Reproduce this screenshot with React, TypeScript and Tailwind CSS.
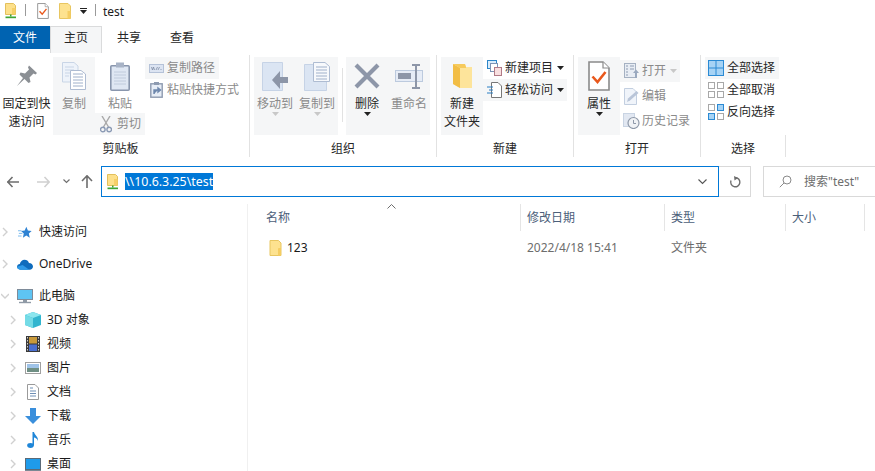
import { ReactNode } from "react";

const GREY = "#8d96a8";

function NetFolder() {
  return (
    <svg width="12" height="16" viewBox="0 0 12 16">
      <path d="M0.5 0.5H8.5L10.5 2.5V11.5H0.5Z" fill="#fde08a" stroke="#e3c05c" />
      <path d="M7 5H10.5V11.5H7Z" fill="#f6cf67" />
      <path d="M5 11.5H6.5V13.5H5Z" fill="#3fa535" />
      <path d="M0.5 13.5H11V15.2H0.5Z" fill="#3fa535" />
    </svg>
  );
}

function CheckDoc({ big }: { big?: boolean }) {
  return (
    <svg width={big ? 22 : 12} height={big ? 30 : 16} viewBox="0 0 22 30">
      <path d="M1 1H15L21 7V29H1Z" fill="#fff" stroke="#8a8a8a" strokeWidth="1.6" />
      <path d="M15 1V7H21" fill="#fff" stroke="#8a8a8a" strokeWidth="1.2" />
      <path d="M4.5 15.5L9.5 21L17.5 11" fill="none" stroke="#e9581c" strokeWidth="2.6" />
    </svg>
  );
}

function Folder({ w = 12, h = 16 }: { w?: number; h?: number }) {
  return (
    <svg width={w} height={h} viewBox="0 0 12 16">
      <path d="M0.5 0.5H9L11.5 3V15.5H0.5Z" fill="#fde28f" stroke="#e8c661" />
      <path d="M9 8H11.5V15.5H8.5V8.5Z" fill="#f5cd62" />
    </svg>
  );
}

function BigFolder() {
  return (
    <svg width="19" height="24" viewBox="0 0 19 24">
      <path d="M0 0H12L13 3H19V24H7L0 20Z" fill="#fde49b" />
      <path d="M0 0L7 4V24L0 20Z" fill="#f2bd45" />
      <path d="M7 4H13V3L12 0H0Z" fill="#f6ca5c" />
    </svg>
  );
}

function Pin() {
  return (
    <svg width="22" height="22" viewBox="0 0 22 22">
      <path
        d="M13 0.5L21 8L19.5 9.5L17.5 8.5L13.5 12.5L14.5 17L12.5 18L8.5 14L1 21L7 13L3.5 9.5L4.5 7.5L9 8.5L13 4.5L12 2.5Z"
        fill="#8b8f94"
      />
    </svg>
  );
}

function Pages({ w = 24, h = 28 }: { w?: number; h?: number }) {
  const lines = [12, 15, 18, 21, 24];
  return (
    <svg width={w} height={h} viewBox="0 0 24 28">
      <path d="M0.5 0.5H12L16 4V20H0.5Z" fill="#eef3fa" stroke="#c9d5e6" />
      <path d="M3 5H12M3 8H12M3 11H12M3 14H7" stroke="#c9d5e6" />
      <path d="M8.5 8.5H19L23.5 12V27.5H8.5Z" fill="#fff" stroke="#aebcd2" />
      {lines.map((y) => (
        <path key={y} d={`M11 ${y}H21`} stroke="#9fb0ca" />
      ))}
    </svg>
  );
}

function Clipboard() {
  return (
    <svg width="20" height="29" viewBox="0 0 20 29">
      <rect x="0.8" y="3.8" width="18.4" height="24.4" rx="1" fill="#dfe7f3" stroke="#8996ad" strokeWidth="1.6" />
      <rect x="6" y="0.5" width="8" height="5" fill="#a8b3c6" />
      <path d="M4 10H16M4 13H16M4 16H16M4 19H16M4 22H16" stroke="#c0cbdc" />
    </svg>
  );
}

function Scissors() {
  return (
    <svg width="12" height="17" viewBox="0 0 12 17">
      <path d="M2 0L8.5 11M10 0L3.5 11" stroke="#a9a9a9" strokeWidth="1.4" />
      <circle cx="2.8" cy="13.5" r="2.3" fill="none" stroke="#8c9bb5" strokeWidth="1.4" />
      <circle cx="9.2" cy="13.5" r="2.3" fill="none" stroke="#8c9bb5" strokeWidth="1.4" />
    </svg>
  );
}

function PathIcon() {
  return (
    <svg width="15" height="9" viewBox="0 0 15 9">
      <rect x="0.5" y="0.5" width="14" height="8" fill="#dce4f2" stroke="#b5c2d8" />
      <path d="M2.5 3L3.5 6L4.5 3L5.5 6M7 6L8.5 3M9 6L10.5 3M11.5 5.5H12.5" stroke="#7d8ba3" strokeWidth="0.8" fill="none" />
    </svg>
  );
}

function ShortcutIcon() {
  return (
    <svg width="13" height="16" viewBox="0 0 13 16">
      <rect x="0.8" y="1.8" width="11.4" height="13.4" fill="#e7edf6" stroke="#8d9ab0" strokeWidth="1.4" />
      <rect x="4" y="0" width="5" height="3" fill="#8d9ab0" />
      <path d="M4 12V8H8M8 6V10L10.5 8Z" stroke="#6f88ad" strokeWidth="1.4" fill="#6f88ad" />
    </svg>
  );
}

function MoveIcon() {
  return (
    <svg width="26" height="29" viewBox="0 0 26 29">
      <path d="M0.5 0.5H20.5V28.5H0.5Z" fill="#dbe5f3" stroke="#c6d3e6" />
      <path d="M26 15H18V9L10 18L18 27V21H26Z" fill={GREY} />
    </svg>
  );
}

function CopyToIcon() {
  return (
    <svg width="26" height="29" viewBox="0 0 26 29">
      <path d="M0.5 2.5H22.5V28.5H0.5Z" fill="#dbe5f3" stroke="#c6d3e6" />
      <path d="M9.5 0.5H21L25.5 4.5V19.5H9.5Z" fill="#f7f9fc" stroke="#aebcd2" />
      <path d="M12 5H23M12 8H23M12 11H23M12 14H23M12 17H23" stroke="#9fb0ca" />
    </svg>
  );
}

function DeleteIcon() {
  return (
    <svg width="26" height="26" viewBox="0 0 26 26">
      <path d="M2 2L24 24M24 2L2 24" stroke={GREY} strokeWidth="4.2" />
    </svg>
  );
}

function RenameIcon() {
  return (
    <svg width="29" height="25" viewBox="0 0 29 25">
      <rect x="0.5" y="6.5" width="27" height="11" fill="#e6ecf6" stroke="#bccade" />
      <rect x="3" y="9" width="13" height="6" fill={GREY} />
      <path d="M17 1H25M17 24H25M21 1V24" stroke={GREY} strokeWidth="2" />
    </svg>
  );
}

function NewItemIcon() {
  return (
    <svg width="15" height="16" viewBox="0 0 15 16">
      <rect x="0.5" y="0.5" width="9" height="8" fill="#d9ecfb" stroke="#2c86c9" />
      <rect x="3.5" y="3.5" width="7" height="8" fill="#fff" stroke="#7c94b5" />
      <rect x="7.5" y="7.5" width="7" height="8" fill="#f8dfe0" stroke="#b07a86" />
    </svg>
  );
}

function EasyIcon() {
  return (
    <svg width="15" height="16" viewBox="0 0 15 16">
      <path d="M4.5 0.5H11L14.5 4V15.5H4.5Z" fill="#fff" stroke="#777" />
      <path d="M0 5H6M2 8H6M0 11H6" stroke="#2b7fc4" />
    </svg>
  );
}

function OpenIcon() {
  return (
    <svg width="15" height="16" viewBox="0 0 15 16">
      <rect x="0.5" y="0.5" width="11" height="14" fill="#e8edf4" stroke="#a5b1c2" />
      <path d="M2 3H4M6 3H10M2 6H4M6 6H10M2 9H4M2 12H4" stroke="#8e9cb2" />
      <path d="M11 15V10H9L12 6.5L15 10H13V15Z" fill="#9aa9bf" />
    </svg>
  );
}

function EditIcon() {
  return (
    <svg width="15" height="17" viewBox="0 0 15 17">
      <path d="M0.5 0.5H9L12.5 4V16.5H0.5Z" fill="#f0f4fa" stroke="#c3cfe0" />
      <path d="M3 14L4 10.5L12.5 3L14.5 5L6 12.5Z" fill="#b9c5d8" />
    </svg>
  );
}

function HistoryIcon() {
  return (
    <svg width="17" height="16" viewBox="0 0 17 16">
      <rect x="0.5" y="0.5" width="11" height="13" fill="#e2e8f2" stroke="#c9d4e3" />
      <circle cx="10.5" cy="10" r="5.5" fill="#f0f2f5" stroke="#8e98a8" strokeWidth="1.2" />
      <path d="M10.5 7V10.5H13" stroke="#8e98a8" fill="none" />
    </svg>
  );
}

function SelectIcon({ fill }: { fill: "all" | "none" | "invert" }) {
  const cell = (x: number, y: number, on: boolean) =>
    on ? (
      <rect key={`${x}${y}`} x={x + 0.5} y={y + 0.5} width="6" height="6" fill="#a6d3f5" stroke="#2a8ad4" />
    ) : (
      <rect key={`${x}${y}`} x={x + 0.5} y={y + 0.5} width="6" height="6" fill="#fff" stroke="#a8a8a8" />
    );
  if (fill === "all") {
    return (
      <svg width="16" height="16" viewBox="0 0 16 16">
        <rect x="0.5" y="0.5" width="15" height="15" fill="#a6d3f5" stroke="#2a8ad4" />
        <path d="M8 0V16M0 8H16" stroke="#2a8ad4" />
      </svg>
    );
  }
  const on = fill === "invert";
  return (
    <svg width="16" height="16" viewBox="0 0 16 16">
      {cell(0, 0, false)}
      {cell(9, 0, on)}
      {cell(0, 9, on)}
      {cell(9, 9, false)}
    </svg>
  );
}

function Caret({ color = "#222" }: { color?: string }) {
  return (
    <svg width="7" height="4" viewBox="0 0 7 4">
      <path d="M0 0H7L3.5 4Z" fill={color} />
    </svg>
  );
}

function Chevron({ open }: { open?: boolean }) {
  return (
    <svg width="8" height="10" viewBox="0 0 8 10">
      <path d={open ? "M0 3L4 7L8 3" : "M2 1L6 5L2 9"} fill="none" stroke="#d0d0d0" strokeWidth="1.4" />
    </svg>
  );
}

function QuickStar() {
  return (
    <svg width="14" height="13" viewBox="0 0 16 14">
      <path d="M9.5 0.5L11.3 4.8L15.6 5.2L12.4 8.2L13.4 13L9.5 10.4L5.6 13L6.6 8.2L3.5 5.2L7.7 4.8Z" fill="#2e82d3" />
      <path d="M0 5H4M1 8H5M0 11H4" stroke="#6cb2ea" />
    </svg>
  );
}

function Cloud() {
  return (
    <svg width="16" height="11" viewBox="0 0 17 11">
      <path d="M3.5 11C1.5 11 0 9.7 0 8C0 6.2 1.4 5 3 5C3.6 2.2 5.6 0.5 8 0.5C10.3 0.5 12 1.8 12.7 3.8C15.2 3.8 17 5.4 17 7.6C17 9.6 15.5 11 13.5 11Z" fill="#0f6cbd" />
      <path d="M3.5 11C1.5 11 0 9.7 0 8L6 6L13 11Z" fill="#2f9ae8" />
    </svg>
  );
}

function Monitor() {
  return (
    <svg width="16" height="15" viewBox="0 0 16 15">
      <rect x="0.5" y="0.5" width="15" height="10" fill="#5ec4f3" stroke="#7e8b99" />
      <path d="M6 11H10V13H6Z" fill="#8f9aa6" />
      <path d="M2 13.5H14" stroke="#8f9aa6" strokeWidth="1.4" />
    </svg>
  );
}

function Cube() {
  return (
    <svg width="16" height="16" viewBox="0 0 16 16">
      <path d="M8 0L16 3V13L8 16L0 13V3Z" fill="#32b5cf" />
      <path d="M0 3L8 6L16 3L8 0Z" fill="#8ce6ee" />
      <path d="M0 3L8 6V16L0 13Z" fill="#74dbe6" />
    </svg>
  );
}

function Film() {
  return (
    <svg width="14" height="16" viewBox="0 0 14 16">
      <rect width="14" height="16" fill="#3a3a3a" />
      <rect x="3" y="1" width="8" height="6.5" fill="#c99a3a" />
      <rect x="3" y="8.5" width="8" height="6.5" fill="#4a6fd0" />
      <path d="M1.5 1V15M12.5 1V15" stroke="#ccc" strokeDasharray="1.5 1.5" />
    </svg>
  );
}

function Picture() {
  return (
    <svg width="16" height="12" viewBox="0 0 16 12">
      <rect x="0.5" y="0.5" width="15" height="11" fill="#fff" stroke="#a0a0a0" />
      <rect x="2" y="2" width="12" height="4" fill="#9fc3e8" />
      <rect x="2" y="6" width="12" height="4" fill="#6f8f84" />
    </svg>
  );
}

function DocIcon() {
  return (
    <svg width="12" height="16" viewBox="0 0 12 16">
      <path d="M0.5 0.5H8L11.5 4V15.5H0.5Z" fill="#fff" stroke="#9a9a9a" />
      <path d="M3 4H6M3 7H9M3 9.5H9M3 12H9" stroke="#6f8fb5" />
    </svg>
  );
}

function Download() {
  return (
    <svg width="16" height="16" viewBox="0 0 16 16">
      <path d="M5 0H11V8H16L8 16L0 8H5Z" fill="#3a8fdc" />
    </svg>
  );
}

function Music() {
  return (
    <svg width="12" height="16" viewBox="0 0 12 16">
      <ellipse cx="3.5" cy="13.5" rx="3.3" ry="2.4" fill="#1f86d8" />
      <path d="M5.5 13.5V0H7C7.4 3 11.5 4.5 11 9C10 6.5 8.5 6 7 5.6V13.5Z" fill="#1f86d8" />
    </svg>
  );
}

function Desktop() {
  return (
    <svg width="16" height="13" viewBox="0 0 16 13">
      <rect x="0.5" y="0.5" width="15" height="11" fill="#1f9bea" stroke="#5a6a78" />
      <path d="M0 12.5H16" stroke="#7a8894" />
    </svg>
  );
}

function BigBtn({
  icon,
  lines,
  w,
  hover,
  dim,
  caret,
}: {
  icon: ReactNode;
  lines: string[];
  w: string;
  hover?: boolean;
  dim?: boolean;
  caret?: string;
}) {
  return (
    <div className={`${w} h-[78px] flex flex-col items-center ${hover ? "bg-[#f5f6f7]" : ""}`}>
      <div className="h-[38px] w-full flex items-center justify-center shrink-0">{icon}</div>
      {lines.map((l) => (
        <span key={l} className={`leading-[18px] whitespace-nowrap ${dim ? "text-[#8a8a8a]" : "text-[#262626]"}`}>
          {l}
        </span>
      ))}
      {caret && (
        <span className="-mt-px flex">
          <Caret color={caret} />
        </span>
      )}
    </div>
  );
}

function SmallBtn({
  icon,
  label,
  w,
  hover,
  dim,
  caret,
  iconW = "w-[22px]",
}: {
  icon: ReactNode;
  label: string;
  w: string;
  hover?: boolean;
  dim?: boolean;
  caret?: string;
  iconW?: string;
}) {
  return (
    <div className={`${w} h-[22px] flex items-center ${hover ? "bg-[#f5f6f7]" : ""}`}>
      <span className={`${iconW} flex justify-center shrink-0`}>{icon}</span>
      <span className={`whitespace-nowrap ${dim ? "text-[#8a8a8a]" : "text-[#262626]"}`}>{label}</span>
      {caret && (
        <span className="ml-auto mr-[3px] flex">
          <Caret color={caret} />
        </span>
      )}
    </div>
  );
}

function Group({
  w,
  label,
  children,
  last,
  labelClass = "",
}: {
  w: string;
  label: string;
  children: ReactNode;
  last?: boolean;
  labelClass?: string;
}) {
  return (
    <div className={`${w} mt-[6px] h-[102px] flex flex-col shrink-0 ${last ? "" : "border-r border-[#e2e2e2]"}`}>
      <div className="h-[78px] mt-[2px] flex shrink-0">{children}</div>
      <div className={`h-[22px] pt-[5px] text-center text-[#262626] leading-[18px] ${labelClass}`}>{label}</div>
    </div>
  );
}

function TreeRow({
  icon,
  label,
  child,
  open,
}: {
  icon: ReactNode;
  label: string;
  child?: boolean;
  open?: boolean;
}) {
  return (
    <div className={`h-6 flex items-center shrink-0 ${child ? "pl-[9px]" : "pl-[1px]"}`}>
      <span className="w-[8px] flex justify-center">
        <Chevron open={open} />
      </span>
      <span className="w-[16px] ml-[8px] flex justify-center">{icon}</span>
      <span className="ml-[6px] text-[#1a1a1a] whitespace-nowrap">{label}</span>
    </div>
  );
}

function HeaderCell({ w, label }: { w: string; label: string }) {
  return (
    <div className={`${w} h-[27px] flex items-center pl-[6px] border-r border-[#e5e5e5] shrink-0 text-[#4c607a]`}>
      {label}
    </div>
  );
}

export default function App() {
  return (
    <div className="w-[875px] h-[471px] overflow-hidden bg-white text-[12px] font-['Noto_Sans','Noto_Sans_CJK_SC',sans-serif]">
      {/* title bar */}
      <div className="h-[26px] flex items-start pt-[3px] pl-[5px]">
        <NetFolder />
        <div className="w-px h-[12px] bg-[#9a9a9a] mt-[1px] ml-[8px]" />
        <div className="ml-[11px]">
          <CheckDoc />
        </div>
        <div className="ml-[10px]">
          <Folder />
        </div>
        <div className="ml-[9px] mt-[5px] flex flex-col items-center gap-[1px]">
          <div className="w-[7px] h-px bg-[#222]" />
          <Caret />
        </div>
        <div className="w-px h-[12px] bg-[#9a9a9a] mt-[1px] ml-[8px]" />
        <span className="ml-[7px] mt-px text-[12px] leading-[16px] text-[#1a1a1a]">test</span>
      </div>

      {/* tabs */}
      <div className="h-[23px] flex items-start">
        <div className="w-[50px] h-[23px] bg-[#0063b1] text-white flex items-center justify-center">文件</div>
        <div className="w-[52px] h-[27px] pb-[4px] bg-[#f5f6f7] border border-b-0 border-[#dadbdc] flex items-center justify-center text-[#262626]">
          主页
        </div>
        <div className="w-[54px] h-[23px] flex items-center justify-center text-[#262626]">共享</div>
        <div className="w-[52px] h-[23px] flex items-center justify-center text-[#262626]">查看</div>
      </div>

      {/* ribbon */}
      <div className="h-[109px] flex items-start">
        <Group w="w-[250px]" label="剪贴板" labelClass="pr-[8px]">
          <BigBtn w="w-[53px]" icon={<Pin />} lines={["固定到快", "速访问"]} />
          <BigBtn w="w-[42px]" hover dim icon={<Pages />} lines={["复制"]} />
          <div className="w-[50px] flex flex-col">
            <div className="h-[56px] flex flex-col items-center">
              <div className="h-[38px] flex items-center shrink-0">
                <Clipboard />
              </div>
              <span className="leading-[18px] text-[#8a8a8a]">粘贴</span>
            </div>
            <SmallBtn w="w-full" hover dim iconW="w-[22px]" icon={<Scissors />} label="剪切" />
          </div>
          <div className="flex flex-col">
            <SmallBtn w="w-[74px]" hover dim icon={<PathIcon />} label="复制路径" />
            <SmallBtn w="w-[90px]" dim icon={<ShortcutIcon />} label="粘贴快捷方式" />
          </div>
        </Group>

        <Group w="w-[187px]" label="组织">
          <div className="ml-[4px] flex">
            <BigBtn w="w-[42px]" hover dim icon={<MoveIcon />} lines={["移动到"]} caret="#c8c8c8" />
            <BigBtn w="w-[42px]" hover dim icon={<CopyToIcon />} lines={["复制到"]} caret="#c8c8c8" />
          </div>
          <div className="w-[8px] flex justify-center pt-[11px]">
            <div className="w-px h-[54px] bg-[#e2e2e2]" />
          </div>
          <BigBtn w="w-[42px]" hover icon={<DeleteIcon />} lines={["删除"]} caret="#222" />
          <BigBtn w="w-[42px]" hover dim icon={<RenameIcon />} lines={["重命名"]} />
        </Group>

        <Group w="w-[137px]" label="新建">
          <div className="ml-[4px]">
            <BigBtn w="w-[42px]" hover icon={<BigFolder />} lines={["新建", "文件夹"]} />
          </div>
          <div className="flex flex-col">
            <SmallBtn w="w-[84px]" iconW="w-[22px]" icon={<NewItemIcon />} label="新建项目" caret="#222" />
            <SmallBtn w="w-[84px]" hover iconW="w-[22px]" icon={<EasyIcon />} label="轻松访问" caret="#222" />
          </div>
        </Group>

        <Group w="w-[127px]" label="打开">
          <div className="ml-[4px]">
            <BigBtn w="w-[42px]" hover icon={<CheckDoc big />} lines={["属性"]} caret="#222" />
          </div>
          <div className="flex flex-col gap-[3px] pt-[3px]">
            <SmallBtn w="w-[60px]" hover dim icon={<OpenIcon />} label="打开" caret="#c8c8c8" />
            <SmallBtn w="w-[60px]" dim icon={<EditIcon />} label="编辑" />
            <SmallBtn w="w-[70px]" dim icon={<HistoryIcon />} label="历史记录" />
          </div>
        </Group>

        <Group w="w-[85px]" label="选择" last labelClass="border-r border-[#e2e2e2]">
          <div className="ml-[4px] flex flex-col">
            <SmallBtn w="w-[74px]" hover iconW="w-[22px]" icon={<SelectIcon fill="all" />} label="全部选择" />
            <SmallBtn w="w-[74px]" iconW="w-[22px]" icon={<SelectIcon fill="none" />} label="全部取消" />
            <SmallBtn w="w-[74px]" iconW="w-[22px]" icon={<SelectIcon fill="invert" />} label="反向选择" />
          </div>
        </Group>
      </div>

      {/* address row */}
      <div className="h-[46px] pt-[8px] flex items-start">
        <div className="w-[101px] h-[31px] flex items-center shrink-0">
          <svg className="ml-[7px]" width="13" height="12" viewBox="0 0 13 12">
            <path d="M0 6H12M5.5 1L0.8 6L5.5 11" fill="none" stroke="#6d6d6d" strokeWidth="1.6" />
          </svg>
          <svg className="ml-[17px]" width="13" height="12" viewBox="0 0 13 12">
            <path d="M0 6H12M7.5 1L12.2 6L7.5 11" fill="none" stroke="#d0d0d0" strokeWidth="1.6" />
          </svg>
          <svg className="ml-[13px]" width="7" height="5" viewBox="0 0 7 5">
            <path d="M0.5 0.5L3.5 3.5L6.5 0.5" fill="none" stroke="#707070" strokeWidth="1.2" />
          </svg>
          <svg className="ml-[11px]" width="12" height="13" viewBox="0 0 12 13">
            <path d="M6 13V1M1 6L6 0.8L11 6" fill="none" stroke="#6d6d6d" strokeWidth="1.6" />
          </svg>
        </div>
        <div className="w-[618px] h-[31px] border border-[#0078d7] flex items-center pl-[5px] pr-[11px] shrink-0">
          <NetFolder />
          <span className="ml-[6px] h-[17px] flex items-center bg-[#0078d7] text-white text-[12.4px] leading-[17px]">
            \\10.6.3.25\test
          </span>
          <svg className="ml-auto" width="9" height="6" viewBox="0 0 9 6">
            <path d="M0.5 0.5L4.5 4.5L8.5 0.5" fill="none" stroke="#555" strokeWidth="1.1" />
          </svg>
        </div>
        <div className="w-[32px] h-[31px] border border-l-0 border-[#d9d9d9] flex items-center justify-center shrink-0">
          <svg width="12" height="12" viewBox="0 0 12 12">
            <path d="M6.5 1.6A4.6 4.6 0 1 1 2 4.5" fill="none" stroke="#6d6d6d" strokeWidth="1.4" />
            <path d="M5 0L9 2L5.5 4.5Z" fill="#6d6d6d" />
          </svg>
        </div>
        <div className="ml-[12px] w-[120px] h-[31px] border border-[#d9d9d9] flex items-center pl-[15px] shrink-0">
          <svg width="13" height="13" viewBox="0 0 13 13">
            <circle cx="8" cy="5" r="4" fill="none" stroke="#8a8a8a" />
            <path d="M5 8L0.8 12.2" stroke="#8a8a8a" />
          </svg>
          <span className="ml-[12px] text-[#6d6d6d] whitespace-nowrap">搜索"test"</span>
        </div>
      </div>

      {/* body */}
      <div className="h-[267px] flex">
        <div className="w-[248px] border-r border-[#f0f0f0] pt-[16px] flex flex-col shrink-0">
          <TreeRow icon={<QuickStar />} label="快速访问" />
          <div className="mt-[8px]">
            <TreeRow icon={<Cloud />} label="OneDrive" />
          </div>
          <div className="mt-[8px]">
            <TreeRow open icon={<Monitor />} label="此电脑" />
          </div>
          <TreeRow child icon={<Cube />} label="3D 对象" />
          <TreeRow child icon={<Film />} label="视频" />
          <TreeRow child icon={<Picture />} label="图片" />
          <TreeRow child icon={<DocIcon />} label="文档" />
          <TreeRow child icon={<Download />} label="下载" />
          <TreeRow child icon={<Music />} label="音乐" />
          <TreeRow child icon={<Desktop />} label="桌面" />
        </div>

        <div className="flex-1 relative">
          <svg className="absolute left-[139px] top-0" width="9" height="5" viewBox="0 0 9 5">
            <path d="M0.5 4.5L4.5 0.5L8.5 4.5" fill="none" stroke="#6d6d6d" />
          </svg>
          <div className="flex pl-[12px] h-[27px]">
            <HeaderCell w="w-[261px]" label="名称" />
            <HeaderCell w="w-[144px]" label="修改日期" />
            <HeaderCell w="w-[121px]" label="类型" />
            <HeaderCell w="w-[79px]" label="大小" />
          </div>
          <div className="mt-[6px] h-[22px] flex items-center">
            <div className="w-[273px] pl-[21px] flex items-center gap-[5px] shrink-0">
              <Folder w={13} h={16} />
              <span className="text-[#1a1a1a]">123</span>
            </div>
            <span className="w-[144px] pl-[6px] text-[#6d6d6d] shrink-0">2022/4/18 15:41</span>
            <span className="pl-[6px] text-[#6d6d6d]">文件夹</span>
          </div>
        </div>
      </div>
    </div>
  );
}
